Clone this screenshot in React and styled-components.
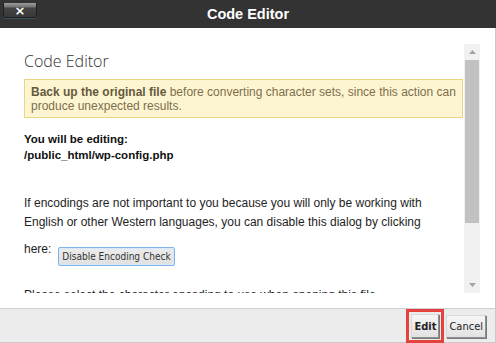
import React from "react";
import styled, { createGlobalStyle } from "styled-components";

const GlobalStyle = createGlobalStyle`
  html, body {
    margin: 0;
    padding: 0;
    background: #fff;
  }
  body {
    font-family: "Liberation Sans", Arial, sans-serif;
  }
`;

const Dialog = styled.div`
  width: 496px;
  height: 343px;
  display: flex;
  flex-direction: column;
  overflow: hidden;
`;

const Header = styled.div`
  height: 28px;
  flex: none;
  background: #333333;
  display: grid;
  grid-template-columns: 1fr auto 1fr;
  align-items: center;
`;

const CloseButton = styled.button`
  justify-self: start;
  align-self: start;
  margin: 3px 0 0 3px;
  width: 34px;
  height: 15px;
  padding: 0;
  border: 1px solid #1f1f1f;
  border-top: none;
  border-radius: 0 0 4px 4px;
  background: linear-gradient(
    180deg,
    #9b9b9b 0%,
    #717171 30%,
    #444444 34%,
    #393939 100%
  );
  box-shadow: 0 1px 1px rgba(60, 110, 130, 0.6);
  color: #fff;
  font-family: "DejaVu Sans", sans-serif;
  font-weight: bold;
  font-size: 13px;
  line-height: 13px;
  cursor: pointer;
`;

const Title = styled.h1`
  margin: 0;
  font-size: 14.5px;
  font-weight: bold;
  color: #fff;
  line-height: 28px;
`;

const Body = styled.div`
  height: 280px;
  flex: none;
  box-sizing: border-box;
  display: flex;
  padding: 16px 15px 15px 24px;
  border-right: 1px solid #c9c9c9;
  background: #fff;
`;

const ScrollArea = styled.div`
  flex: 1;
  height: 249px;
  overflow: hidden;
  padding: 7px 1px 0 0;
  box-sizing: border-box;
`;

const Scrollbar = styled.div`
  width: 16px;
  height: 249px;
  flex: none;
  background: #f1f1f1;
  display: flex;
  flex-direction: column;
`;

const ScrollArrow = styled.div`
  height: 16px;
  flex: none;
  display: flex;
  align-items: center;
  justify-content: center;
`;

const ScrollTrack = styled.div`
  flex: 1;
  display: flex;
  flex-direction: column;
`;

const ScrollThumb = styled.div`
  height: 163px;
  margin-left: 1px;
  width: 14px;
  background: #c1c1c1;
`;

const Heading = styled.h2`
  margin: 0;
  font-family: "Open Sans", sans-serif;
  font-weight: 300;
  font-size: 16px;
  line-height: 20px;
  color: #333;
`;

const Warning = styled.div`
  margin-top: 8px;
  padding: 5px 6px 4px;
  border: 1px solid #e6d685;
  background: #fdf5d2;
  color: #7d6f4a;
  font-size: 12px;
  line-height: 14px;

  b {
    color: #665a3c;
  }
`;

const Editing = styled.div`
  margin-top: 13px;
  font-size: 11.5px;
  line-height: 16px;
  font-weight: bold;
  color: #111;
`;

const Paragraph = styled.p`
  margin: ${(p) => p.$top}px 0 0;
  font-size: 12px;
  line-height: 19px;
  color: #1e1e1e;
`;

const HereRow = styled.div`
  margin-top: 8px;
  display: flex;
  align-items: flex-start;
  gap: 7px;
  font-size: 12px;
  line-height: 19px;
  color: #1e1e1e;
`;

const SmallButton = styled.button`
  margin-top: 7px;
  height: 19px;
  padding: 0 3px;
  border: 1px solid #7eb4ea;
  border-radius: 2px;
  background: linear-gradient(180deg, #ececec 0%, #e0e0e0 100%);
  box-shadow: inset 0 0 0 1px #d6e8fa;
  color: #333;
  font-family: "DejaVu Sans Condensed", "DejaVu Sans", sans-serif;
  font-size: 10px;
  line-height: 15px;
  cursor: pointer;
`;

const Footer = styled.div`
  flex: 1;
  box-sizing: border-box;
  display: flex;
  justify-content: flex-end;
  align-items: center;
  gap: 7px;
  padding: 1px 9px 0 0;
  background: #ececec;
  border-top: 1px solid #cfcfcf;
  border-bottom: 1px solid #cacaca;
  border-right: 1px solid #c9c9c9;
`;

const FooterButton = styled.button`
  height: ${(p) => (p.$primary ? 24 : 23)}px;
  padding: 0 2px;
  border: 1px solid #8f8f8f;
  border-top-color: #d8d8d8;
  border-left-color: #d8d8d8;
  box-shadow: 1px 1px 0 #7a7a7a;
  background: linear-gradient(180deg, #f6f6f6 0%, #e2e2e2 100%);
  color: #222;
  font-family: "DejaVu Sans Condensed", "DejaVu Sans", sans-serif;
  font-size: 11px;
  font-weight: ${(p) => (p.$primary ? "bold" : "normal")};
  cursor: pointer;
  outline: ${(p) => (p.$primary ? "3px solid #e6423d" : "none")};
  outline-offset: 2px;
`;

function Triangle({ down }) {
  return (
    <svg width="7" height="4" viewBox="0 0 7 4">
      <polygon
        points={down ? "0,0 7,0 3.5,4" : "3.5,0 7,4 0,4"}
        fill="#a3a3a3"
      />
    </svg>
  );
}

export default function App() {
  return (
    <>
      <GlobalStyle />
      <Dialog>
        <Header>
          <CloseButton aria-label="Close">×</CloseButton>
          <Title>Code Editor</Title>
          <span />
        </Header>
        <Body>
          <ScrollArea>
            <Heading>Code Editor</Heading>
            <Warning>
              <b>Back up the original file</b> before converting character
              sets, since this action can produce unexpected results.
            </Warning>
            <Editing>
              You will be editing:
              <br />
              /public_html/wp-config.php
            </Editing>
            <Paragraph $top={31}>
              If encodings are not important to you because you will only be
              working with English or other Western languages, you can disable
              this dialog by clicking
            </Paragraph>
            <HereRow>
              here:
              <SmallButton>Disable Encoding Check</SmallButton>
            </HereRow>
            <Paragraph $top={20}>
              Please select the character encoding to use when opening this
              file.
            </Paragraph>
          </ScrollArea>
          <Scrollbar>
            <ScrollArrow>
              <Triangle />
            </ScrollArrow>
            <ScrollTrack>
              <ScrollThumb />
            </ScrollTrack>
            <ScrollArrow>
              <Triangle down />
            </ScrollArrow>
          </Scrollbar>
        </Body>
        <Footer>
          <FooterButton $primary>Edit</FooterButton>
          <FooterButton>Cancel</FooterButton>
        </Footer>
      </Dialog>
    </>
  );
}
